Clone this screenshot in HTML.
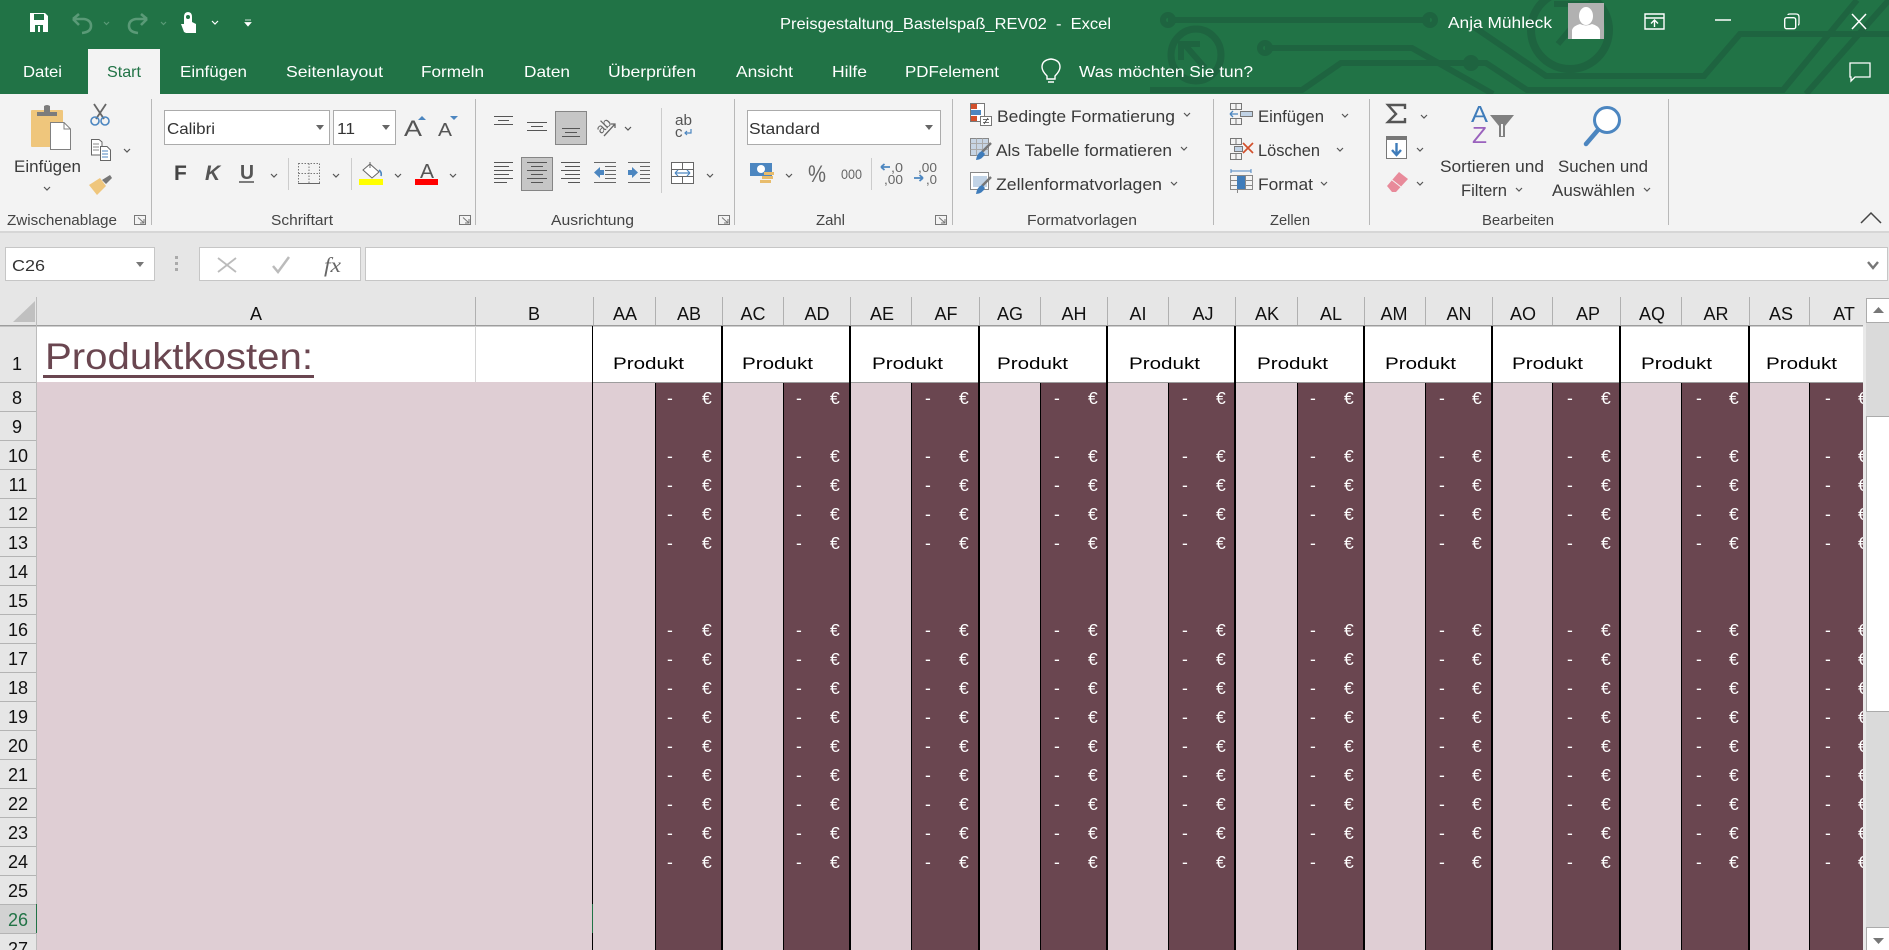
<!DOCTYPE html>
<html lang="de"><head><meta charset="utf-8"><title>Preisgestaltung_Bastelspaß_REV02 - Excel</title>
<style>
html,body{margin:0;padding:0;width:1889px;height:950px;overflow:hidden;background:#e6e6e6}
svg{display:block}
text{font-family:"Liberation Sans",sans-serif;fill:#333;font-size:16px}
.w{fill:#fff}
.r{font-size:16.5px;fill:#3a3a3a}
.g{font-size:14.5px;fill:#444}
.h{font-size:18px;fill:#111;text-anchor:middle}
.p{font-size:17px;fill:#000}
.e{font-size:17.5px;fill:#fff}
.s{fill:none;stroke:#666;stroke-width:1.3}
.c{fill:none;stroke:#555;stroke-width:1.2}
</style></head><body>
<svg width="1889" height="950" viewBox="0 0 1889 950" xmlns="http://www.w3.org/2000/svg">
<defs><clipPath id="gc"><rect x="37" y="325" width="1826" height="625"/></clipPath></defs>
<!-- title bar -->
<rect width="1889" height="94" fill="#217346"/>
<g fill="none" stroke="#1e6440" stroke-width="6">
<path d="M1168 20H1430M1474 27L1546 76H1704L1740 34H1889"/>
<path d="M1265 48H1412L1493 94"/>
<path d="M1150 90H1302L1341 63H1471H1486L1527 90H1783L1857 0"/>
<path d="M1806 94L1889 0"/>
<circle cx="1168" cy="20" r="5"/><circle cx="1430" cy="20" r="5"/><circle cx="1265" cy="48" r="5"/><circle cx="1471" cy="63" r="5"/>
<ellipse cx="1196" cy="55" rx="25" ry="26" stroke-width="7"/>
<path d="M1185 45L1205 68M1181 60V44H1200" stroke-width="6"/>
<circle cx="1570" cy="30" r="39" stroke-width="8"/>
<path d="M1554 4H1592M1590 6L1558 44" stroke-width="6"/>
</g>
<!-- QAT -->
<path d="M30 13H45L48 16V32H30Z" fill="#fff"/><rect x="34" y="14" width="10" height="6" fill="#217346"/><rect x="35" y="25" width="8" height="7" fill="#217346"/><rect x="38" y="26" width="2" height="6" fill="#fff"/>
<path d="M73 19L79 14M73 19L79 25M73 19H84Q91 20 91 26Q91 32 82 33" fill="none" stroke="#5a9a77" stroke-width="2.6"/>
<path d="M147 19L141 14M147 19L141 25M147 19H136Q129 20 129 26Q129 32 138 33" fill="none" stroke="#5a9a77" stroke-width="2.6"/>
<path d="M104 22L106.500 24.500L109 22M161 22L163.500 24.500L166 22" fill="none" stroke="#5a9a77" stroke-width="1.2"/>
<path d="M184 32L181 24L184 24V17Q184 12 188 12Q192 12 192 17V22L196 24V33H186Z" fill="#fff"/><circle cx="188" cy="17" r="2" fill="#217346"/>
<path d="M212 21L215 24L218 21" fill="none" stroke="#fff" stroke-width="1.2"/>
<path d="M245 20H251M245 22.500H251L248 26Z" fill="#fff" stroke="#fff" stroke-width=".8"/>
<text class="w" x="780" y="29" textLength="331" lengthAdjust="spacingAndGlyphs" xml:space="preserve">Preisgestaltung_Bastelspaß_REV02  -  Excel</text>
<text class="w" x="1448" y="28" textLength="104" lengthAdjust="spacingAndGlyphs">Anja Mühleck</text>
<rect x="1568" y="3" width="36" height="36" fill="#b1b1b1"/>
<ellipse cx="1586" cy="16" rx="7" ry="9" fill="#fff"/><path d="M1572 39V30Q1573 26 1580 24Q1586 27 1592 24Q1599 26 1600 30V39Z" fill="#fff"/>
<path d="M1645 14H1664V29H1645ZM1645 18H1664M1654.500 27V20.500M1651 23.500L1654.500 20L1658 23.500" fill="none" stroke="#fff" stroke-width="1.4"/>
<path d="M1715 20H1731" stroke="#fff" stroke-width="1.5"/>
<rect x="1784.700" y="17.700" width="11" height="11" rx="2" fill="none" stroke="#fff" stroke-width="1.4"/><path d="M1788 15V15Q1788 14 1790 14H1796Q1799 14 1799 17V23Q1799 25 1798 25" fill="none" stroke="#fff" stroke-width="1.3"/>
<path d="M1852 14L1866 29M1866 14L1852 29" stroke="#fff" stroke-width="1.5"/>
<path d="M1850 63H1870V77H1855L1851 81V77H1850Z" fill="none" stroke="#fff" stroke-width="1.3"/>
<!-- tabs -->
<rect x="88" y="49" width="72" height="46" fill="#f3f3f3"/>
<g class="tabs">
<text class="w" x="23" y="77" textLength="39" lengthAdjust="spacingAndGlyphs">Datei</text>
<text x="107" y="77" textLength="34" lengthAdjust="spacingAndGlyphs" style="fill:#217346">Start</text>
<text class="w" x="180" y="77" textLength="67" lengthAdjust="spacingAndGlyphs">Einfügen</text>
<text class="w" x="286" y="77" textLength="97" lengthAdjust="spacingAndGlyphs">Seitenlayout</text>
<text class="w" x="421" y="77" textLength="63" lengthAdjust="spacingAndGlyphs">Formeln</text>
<text class="w" x="524" y="77" textLength="46" lengthAdjust="spacingAndGlyphs">Daten</text>
<text class="w" x="608" y="77" textLength="88" lengthAdjust="spacingAndGlyphs">Überprüfen</text>
<text class="w" x="736" y="77" textLength="57" lengthAdjust="spacingAndGlyphs">Ansicht</text>
<text class="w" x="832" y="77" textLength="35" lengthAdjust="spacingAndGlyphs">Hilfe</text>
<text class="w" x="905" y="77" textLength="94" lengthAdjust="spacingAndGlyphs">PDFelement</text>
<text class="w" x="1079" y="77" textLength="174" lengthAdjust="spacingAndGlyphs">Was möchten Sie tun?</text>
</g>
<path d="M1047 76Q1042 71 1042 67Q1042 60 1051 59Q1060 60 1060 67Q1060 71 1055 76V79H1047ZM1048 82H1054" fill="none" stroke="#fff" stroke-width="1.4"/>
<!-- ribbon -->
<rect y="94" width="1889" height="137" fill="#f3f3f3"/>
<rect y="231" width="1889" height="2" fill="#d6d6d6"/>
<path d="M151.500 99V225M475.500 99V225M734.500 99V225M952.500 99V225M1213.500 99V225M1369.500 99V225M1668.500 99V225" stroke="#b8b8b8"/>
<text class="g" x="7" y="225" textLength="110" lengthAdjust="spacingAndGlyphs">Zwischenablage</text>
<text class="g" x="271" y="225" textLength="62" lengthAdjust="spacingAndGlyphs">Schriftart</text>
<text class="g" x="551" y="225" textLength="83" lengthAdjust="spacingAndGlyphs">Ausrichtung</text>
<text class="g" x="816" y="225" textLength="29" lengthAdjust="spacingAndGlyphs">Zahl</text>
<text class="g" x="1027" y="225" textLength="110" lengthAdjust="spacingAndGlyphs">Formatvorlagen</text>
<text class="g" x="1270" y="225" textLength="40" lengthAdjust="spacingAndGlyphs">Zellen</text>
<text class="g" x="1482" y="225" textLength="72" lengthAdjust="spacingAndGlyphs">Bearbeiten</text>
<path d="M134.500 215.500H145.500V224.500H134.500ZM138 217.500L144 223M144 219V223H140M459.500 215.500H470.500V224.500H459.500ZM463 217.500L469 223M469 219V223H465M718.500 215.500H729.500V224.500H718.500ZM722 217.500L728 223M728 219V223H724M935.500 215.500H946.500V224.500H935.500ZM939 217.500L945 223M945 219V223H941" fill="none" stroke="#777"/>
<!-- clipboard -->
<rect x="31" y="110" width="32" height="37" rx="1" fill="#efc67c"/>
<path d="M37 116V112H44V106Q47 104 50 106V112H57V116Z" fill="#7c7c7c"/>
<path d="M50.500 122.500H64L70.500 129V149.500H50.500Z" fill="#fff" stroke="#808080"/><path d="M64 122.500V129H70.500" fill="none" stroke="#808080"/>
<text class="r" x="14" y="172" textLength="67" lengthAdjust="spacingAndGlyphs">Einfügen</text>
<path d="M44 187L47 190L50 187M124 149L127 152L130 149" class="c"/>
<path d="M94 104L104 119M106 104L96 119" stroke="#666" stroke-width="1.8" fill="none"/>
<circle cx="95" cy="121" r="4" fill="none" stroke="#4c86c0" stroke-width="1.6"/><circle cx="105" cy="121" r="4" fill="none" stroke="#4c86c0" stroke-width="1.6"/>
<path d="M91.500 139.500H99L102 142V155H91.500Z" fill="#fff" stroke="#666"/><path d="M100.500 146.500H107L110.500 150V160.500H100.500Z" fill="#fff" stroke="#666"/>
<path d="M102 151H108M102 154H108M102 157H108" stroke="#4c86c0"/><path d="M93 144H99M93 147H99M93 150H99" stroke="#888"/>
<path d="M89 185L100 178L106 186L97 195Z" fill="#efc67c"/><path d="M102 180L110 175L112 178L106 184Z" fill="#777"/>
<!-- font -->
<rect x="164.500" y="110.500" width="165" height="34" fill="#fff" stroke="#ababab"/>
<rect x="333.500" y="110.500" width="62" height="34" fill="#fff" stroke="#ababab"/>
<text x="167" y="134" textLength="48" lengthAdjust="spacingAndGlyphs">Calibri</text>
<text x="337" y="134" textLength="18" lengthAdjust="spacingAndGlyphs">11</text>
<path d="M316 125H324L320 130ZM382 125H390L386 130Z" fill="#666"/>
<text x="404" y="136" style="font-size:22px;fill:#555" textLength="18" lengthAdjust="spacingAndGlyphs">A</text>
<text x="438" y="136" style="font-size:18px;fill:#555" textLength="14" lengthAdjust="spacingAndGlyphs">A</text>
<path d="M418 120L422 116L426 120ZM450 116H458L454 120Z" fill="#4c86c0"/>
<text x="174" y="180" style="font-size:21px;font-weight:bold;fill:#444">F</text>
<text x="205" y="180" style="font-size:21px;font-weight:bold;font-style:italic;fill:#555">K</text>
<text x="240" y="179" style="font-size:20px;font-weight:bold;fill:#555" textLength="14" lengthAdjust="spacingAndGlyphs">U</text>
<path d="M239 182H254" stroke="#555" stroke-width="1.500"/>
<path d="M271 174L274 177L277 174M333 174L336 177L339 174M395 174L398 177L401 174M450 174L453 177L456 174M625 127L628 130L631 127M707 174L710 177L713 174M786 174L789 177L792 174" class="c"/>
<path d="M288.500 158V190M351.500 158V190M871.500 158V190" stroke="#ccc"/>
<path d="M298.500 163.500H319.500V183.500H298.500ZM309 163.500V183.500M298.500 173.500H319.500" fill="none" stroke="#777" stroke-dasharray="1.500 1.500"/><path d="M298 183.500H320" stroke="#666"/>
<path d="M370 164L379 172L372 178L363 170Z" fill="#fff" stroke="#666"/><path d="M370 162V168" stroke="#666"/><path d="M379 170Q382 172 381 176" stroke="#4c86c0" fill="none" stroke-width="1.600"/>
<rect x="359" y="179" width="24" height="6" fill="#ff0"/>
<text x="420" y="178" style="font-size:20px;fill:#555" textLength="14" lengthAdjust="spacingAndGlyphs">A</text>
<rect x="415" y="179" width="23" height="6" fill="#f00"/>
<!-- alignment -->
<rect x="555.500" y="111.500" width="31" height="33" fill="#c6c6c6" stroke="#858585"/>
<rect x="521.500" y="157.500" width="31" height="33" fill="#c6c6c6" stroke="#858585"/>
<path d="M494 116.500H513M498 120.500H509M494 124.500H513M527 122.500H547M531 126.500H543M527 130.500H547M562 128.500H580M565 132.500H577M562 136.500H580M494 162.500H513M494 166.500H509M494 170.500H513M494 174.500H509M494 178.500H513M494 182.500H507M527 162.500H547M531 166.500H543M527 170.500H547M531 174.500H543M527 178.500H547M531 182.500H543M561 162.500H580M565 166.500H580M561 170.500H580M565 174.500H580M561 178.500H580M568 182.500H580" stroke="#555" fill="none"/>
<path d="M594 162.500H616M605 166.500H616M605 170.500H616M605 174.500H616M605 178.500H616M594 182.500H616M628 162.500H650M640 166.500H650M640 170.500H650M640 174.500H650M640 178.500H650M628 182.500H650" stroke="#666" fill="none"/>
<path d="M594 172.500L600 167V170H604V175H600V178ZM638 172.500L632 167V170H628V175H632V178Z" fill="#4c86c0"/>
<text x="596" y="130" style="font-size:14px;fill:#666" transform="rotate(-45 604 126)">ab</text>
<path d="M604 136L615 124M611 124H615V128" fill="none" stroke="#666" stroke-width="1.300"/>
<path d="M661.500 108V193" stroke="#ccc"/>
<text x="675" y="125" style="font-size:15px;fill:#555" textLength="17" lengthAdjust="spacingAndGlyphs">ab</text>
<text x="675" y="137" style="font-size:15px;fill:#555">c</text>
<path d="M691 129V133H685M687 131L685 133L687 135" fill="none" stroke="#4c86c0" stroke-width="1.200"/>
<path d="M671.500 162.500H693.500V183.500H671.500ZM671.500 169.500H693.500M671.500 176.500H693.500M682.500 162.500V169.500M682.500 176.500V183.500" fill="#fff" stroke="#666"/>
<path d="M675 173H690M675 173L678 170M675 173L678 176M690 173L687 170M690 173L687 176" fill="none" stroke="#4c86c0" stroke-width="1.200"/>
<!-- number -->
<rect x="747.500" y="110.500" width="193" height="34" fill="#fff" stroke="#ababab"/>
<path d="M925 125H933L929 130Z" fill="#666"/>
<text x="749" y="134" textLength="71" lengthAdjust="spacingAndGlyphs">Standard</text>
<rect x="750" y="163" width="22" height="13" fill="#4c86c0"/><circle cx="761" cy="169" r="4" fill="#fff"/>
<rect x="764" y="172" width="10" height="3" fill="#e8bc6c"/><rect x="762" y="176" width="11" height="3" fill="#e8bc6c"/><rect x="760" y="180" width="11" height="3" fill="#e8bc6c"/>
<text x="808" y="182" style="font-size:24px;fill:#666" textLength="18" lengthAdjust="spacingAndGlyphs">%</text>
<text x="841" y="179" style="font-size:14px;fill:#666" textLength="21" lengthAdjust="spacingAndGlyphs">000</text>
<path d="M881 167H890M881 167L884.500 164M881 167L884.500 170M914 178H923M923 178L919.500 175M923 178L919.500 181" fill="none" stroke="#4c86c0" stroke-width="1.800"/>
<text x="891" y="172" style="font-size:13px;fill:#666" textLength="12" lengthAdjust="spacingAndGlyphs">,0</text>
<text x="884" y="184" style="font-size:13px;fill:#666" textLength="19" lengthAdjust="spacingAndGlyphs">,00</text>
<text x="918" y="172" style="font-size:13px;fill:#666" textLength="19" lengthAdjust="spacingAndGlyphs">,00</text>
<text x="926" y="184" style="font-size:13px;fill:#666" textLength="11" lengthAdjust="spacingAndGlyphs">,0</text>
<!-- styles -->
<rect x="970.500" y="103.500" width="14" height="18" fill="#fff" stroke="#777"/><rect x="971" y="104" width="6" height="5" fill="#d2502c"/><rect x="971" y="110" width="10" height="5" fill="#4c86c0"/><rect x="971" y="116" width="6" height="5" fill="#d2502c"/>
<rect x="980.500" y="116.500" width="11" height="9" fill="#fff" stroke="#777"/><path d="M983 119.500H989M983 122.500H989M984 124L988 118" stroke="#444" stroke-width=".8"/>
<text class="r" x="997" y="122" textLength="178" lengthAdjust="spacingAndGlyphs">Bedingte Formatierung</text>
<path d="M970.500 138.500H988.500V155.500H970.500Z" fill="#c7d5e4" stroke="#888"/><path d="M970.500 143.500H988.500M970.500 149.500H988.500M976.500 138.500V155.500M982.500 138.500V155.500" stroke="#aaa"/>
<path d="M982 152L991 143" stroke="#777" stroke-width="2.500"/><path d="M976 160Q977 153 982 151L985 154Q982 160 976 160Z" fill="#3f7cba"/>
<text class="r" x="996" y="156" textLength="176" lengthAdjust="spacingAndGlyphs">Als Tabelle formatieren</text>
<path d="M970.500 172.500H988.500V189.500H970.500Z" fill="#fff" stroke="#888"/><rect x="973" y="176" width="14" height="11" fill="#c1d3e6"/>
<path d="M982 186L991 177" stroke="#777" stroke-width="2.500"/><path d="M976 194Q977 187 982 185L985 188Q982 194 976 194Z" fill="#3f7cba"/>
<text class="r" x="996" y="190" textLength="166" lengthAdjust="spacingAndGlyphs">Zellenformatvorlagen</text>
<path d="M1184 113L1187 116L1190 113M1181 147L1184 150L1187 147M1171 182L1174 185L1177 182" class="c"/>
<!-- cells -->
<path d="M1230.500 103.500H1241.500V109.500H1230.500ZM1236 103.500V109.500M1230.500 118.500H1241.500V124.500H1230.500ZM1236 118.500V124.500" fill="none" stroke="#777"/>
<rect x="1240.500" y="111.500" width="12" height="5" fill="#c1d3e6" stroke="#777"/><path d="M1230 114H1238M1230 114L1233 111M1230 114L1233 117" fill="none" stroke="#4c86c0" stroke-width="1.300"/>
<text class="r" x="1258" y="122" textLength="66" lengthAdjust="spacingAndGlyphs">Einfügen</text>
<path d="M1230.500 138.500H1241.500V144.500H1230.500ZM1236 138.500V144.500M1230.500 153.500H1241.500V159.500H1230.500ZM1236 153.500V159.500" fill="none" stroke="#777"/><rect x="1234.500" y="146.500" width="8" height="5" fill="#c1d3e6" stroke="#777"/>
<path d="M1243 143L1253 153M1253 143L1243 153" stroke="#d2502c" stroke-width="1.700"/>
<text class="r" x="1258" y="156" textLength="62" lengthAdjust="spacingAndGlyphs">Löschen</text>
<path d="M1231 171H1251M1231 169V173M1251 169V173" stroke="#4c86c0"/><path d="M1230.500 175.500H1252.500V189.500H1230.500ZM1230.500 180.500H1252.500M1230.500 185.500H1252.500M1237.500 175.500V193M1245.500 175.500V189.500" fill="none" stroke="#888"/><rect x="1237" y="176" width="8" height="13" fill="#3f7cba"/>
<text class="r" x="1258" y="190" textLength="55" lengthAdjust="spacingAndGlyphs">Format</text>
<path d="M1342 114L1345 117L1348 114M1337 148L1340 151L1343 148M1321 182L1324 185L1327 182" class="c"/>
<!-- editing -->
<path d="M1405 109V105H1388L1396 114L1388 122H1405V118" fill="none" stroke="#555" stroke-width="2.400"/>
<rect x="1386.500" y="136.500" width="20" height="22" fill="#fff" stroke="#777"/><rect x="1386" y="136" width="21" height="4" fill="#777"/>
<path d="M1396.500 143V154M1392 150L1396.500 155L1401 150" fill="none" stroke="#3f7cba" stroke-width="2.400"/>
<path d="M1387 186L1399 172L1408 179L1396 192H1392Z" fill="#e88a9a"/><path d="M1392 180L1401 187" stroke="#f3f3f3"/>
<path d="M1421 115L1424 118L1427 115M1417 148L1420 151L1423 148M1417 182L1420 185L1423 182" class="c"/>
<text x="1471" y="122" style="font-size:23px;fill:#3f7cba" textLength="17" lengthAdjust="spacingAndGlyphs">A</text>
<text x="1472" y="143" style="font-size:23px;fill:#9a62bd" textLength="15" lengthAdjust="spacingAndGlyphs">Z</text>
<path d="M1490 115H1514L1505 126V137H1499V126Z" fill="#808080"/><path d="M1501 124V136H1503V124Z" fill="#f3f3f3"/>
<circle cx="1607" cy="120" r="12.500" fill="#fff" stroke="#4c86c0" stroke-width="3"/>
<path d="M1598 130L1586 144" stroke="#4c86c0" stroke-width="4.500" stroke-linecap="round"/>
<text class="r" x="1440" y="172" textLength="104" lengthAdjust="spacingAndGlyphs">Sortieren und</text>
<text class="r" x="1461" y="196" textLength="46" lengthAdjust="spacingAndGlyphs">Filtern</text>
<text class="r" x="1558" y="172" textLength="90" lengthAdjust="spacingAndGlyphs">Suchen und</text>
<text class="r" x="1552" y="196" textLength="83" lengthAdjust="spacingAndGlyphs">Auswählen</text>
<path d="M1516 188L1519 191L1522 188M1644 188L1647 191L1650 188" class="c"/>
<path d="M1861 223L1871 213L1881 223" fill="none" stroke="#444" stroke-width="1.500"/>
<!-- formula bar -->
<rect x="5.500" y="247.500" width="149" height="33" fill="#fff" stroke="#c6c6c6"/>
<text x="12" y="271" textLength="33" lengthAdjust="spacingAndGlyphs">C26</text>
<path d="M136 262H144L140 267Z" fill="#777"/>
<path d="M176.500 256V259M176.500 262V265M176.500 268V271" stroke="#aaa" stroke-width="3"/>
<rect x="199.500" y="247.500" width="161" height="33" fill="#fff" stroke="#c6c6c6"/>
<rect x="365.500" y="247.500" width="1522" height="33" fill="#fff" stroke="#c6c6c6"/>
<path d="M218 258L236 272M236 258L218 272" stroke="#bbb" stroke-width="1.800"/>
<path d="M273 266L278 272L289 257" fill="none" stroke="#bbb" stroke-width="2.500"/>
<text x="324" y="272" style="font-family:'Liberation Serif',serif;font-style:italic;font-size:21px;fill:#666" textLength="17" lengthAdjust="spacingAndGlyphs">fx</text>
<path d="M1868 262L1873 268L1878 262" fill="none" stroke="#777" stroke-width="2.400"/>
<!-- grid -->
<rect y="297" width="1889" height="653" fill="#e6e6e6"/>
<path d="M35 301V322H13Z" fill="#c0c0c0"/>
<rect x="37" y="326" width="1826" height="57" fill="#fff"/>
<rect x="37" y="382" width="1826" height="568" fill="#dfced4"/>
<g fill="#6a4650">
<rect x="656" y="382" width="66" height="568"/><rect x="784" y="382" width="66" height="568"/><rect x="912" y="382" width="67" height="568"/><rect x="1041" y="382" width="66" height="568"/><rect x="1169" y="382" width="66" height="568"/><rect x="1298" y="382" width="66" height="568"/><rect x="1426" y="382" width="66" height="568"/><rect x="1553" y="382" width="67" height="568"/><rect x="1682" y="382" width="67" height="568"/><rect x="1810" y="382" width="53" height="568"/>
</g>
<rect x="0" y="325" width="1863" height="1.500" fill="#9d9d9d"/>
<rect x="593" y="382" width="1270" height="1" fill="#9d9d9d"/>
<path d="M475.500 326V382" stroke="#d4d4d4"/>
<path d="M36.500 297V950" stroke="#bcbcbc"/>
<path d="M475.500 297V325M593.500 297V325M655.500 297V325M722.500 297V325M783.500 297V325M850.500 297V325M911.500 297V325M979.500 297V325M1040.500 297V325M1107.500 297V325M1168.500 297V325M1235.500 297V325M1297.500 297V325M1364.500 297V325M1425.500 297V325M1492.500 297V325M1552.500 297V325M1620.500 297V325M1681.500 297V325M1749.500 297V325M1809.500 297V325" stroke="#b0b0b0"/>
<g stroke="#000" fill="none">
<path d="M592.500 326V950M655.500 383V950M783.500 383V950M911.500 383V950M1040.500 383V950M1168.500 383V950M1297.500 383V950M1425.500 383V950M1552.500 383V950M1681.500 383V950M1809.500 383V950"/>
<path stroke-width="2" d="M722 326V950M850 326V950M979 326V950M1107 326V950M1235 326V950M1364 326V950M1492 326V950M1620 326V950M1749 326V950"/>
</g>
<path d="M592.500 904V933" stroke="#217346"/>
<text x="45" y="369" style="font-size:37px;fill:#6a4650" textLength="268" lengthAdjust="spacingAndGlyphs">Produktkosten:</text>
<rect x="43" y="375" width="271" height="3" fill="#6a4650"/>
<g class="hd">
<text class="h" x="256" y="320">A</text><text class="h" x="534" y="320">B</text><text class="h" x="625" y="320">AA</text><text class="h" x="689" y="320">AB</text><text class="h" x="753" y="320">AC</text><text class="h" x="817" y="320">AD</text><text class="h" x="882" y="320">AE</text><text class="h" x="946" y="320">AF</text><text class="h" x="1010" y="320">AG</text><text class="h" x="1074" y="320">AH</text><text class="h" x="1138" y="320">AI</text><text class="h" x="1203" y="320">AJ</text><text class="h" x="1267" y="320">AK</text><text class="h" x="1331" y="320">AL</text><text class="h" x="1394" y="320">AM</text><text class="h" x="1459" y="320">AN</text><text class="h" x="1523" y="320">AO</text><text class="h" x="1588" y="320">AP</text><text class="h" x="1652" y="320">AQ</text><text class="h" x="1716" y="320">AR</text><text class="h" x="1781" y="320">AS</text><text class="h" x="1844" y="320">AT</text>
</g>
<g>
<text class="p" x="613" y="369" textLength="71" lengthAdjust="spacingAndGlyphs">Produkt</text><text class="p" x="742" y="369" textLength="71" lengthAdjust="spacingAndGlyphs">Produkt</text><text class="p" x="872" y="369" textLength="71" lengthAdjust="spacingAndGlyphs">Produkt</text><text class="p" x="997" y="369" textLength="71" lengthAdjust="spacingAndGlyphs">Produkt</text><text class="p" x="1129" y="369" textLength="71" lengthAdjust="spacingAndGlyphs">Produkt</text><text class="p" x="1257" y="369" textLength="71" lengthAdjust="spacingAndGlyphs">Produkt</text><text class="p" x="1385" y="369" textLength="71" lengthAdjust="spacingAndGlyphs">Produkt</text><text class="p" x="1512" y="369" textLength="71" lengthAdjust="spacingAndGlyphs">Produkt</text><text class="p" x="1641" y="369" textLength="71" lengthAdjust="spacingAndGlyphs">Produkt</text><text class="p" x="1766" y="369" textLength="71" lengthAdjust="spacingAndGlyphs">Produkt</text>
</g>
<!-- row headers -->
<rect x="0" y="904" width="36" height="29" fill="#d2d2d2"/>
<path d="M36.500 904V933" stroke="#217346"/>
<path d="M0 411.500H36M0 440.500H36M0 469.500H36M0 498.500H36M0 527.500H36M0 556.500H36M0 585.500H36M0 614.500H36M0 643.500H36M0 672.500H36M0 701.500H36M0 730.500H36M0 759.500H36M0 788.500H36M0 817.500H36M0 846.500H36M0 875.500H36M0 904.500H36M0 933.500H36M0 382.500H36" stroke="#b4b4b4"/>
<text class="h" x="17" y="370">1</text>
<text class="h" x="17" y="404">8</text><text class="h" x="17" y="433">9</text><text class="h" x="18" y="462">10</text><text class="h" x="18" y="491">11</text><text class="h" x="18" y="520">12</text><text class="h" x="18" y="549">13</text><text class="h" x="18" y="578">14</text><text class="h" x="18" y="607">15</text><text class="h" x="18" y="636">16</text><text class="h" x="18" y="665">17</text><text class="h" x="18" y="694">18</text><text class="h" x="18" y="723">19</text><text class="h" x="18" y="752">20</text><text class="h" x="18" y="781">21</text><text class="h" x="18" y="810">22</text><text class="h" x="18" y="839">23</text><text class="h" x="18" y="868">24</text><text class="h" x="18" y="897">25</text><text class="h" x="18" y="926" style="fill:#217346">26</text><text class="h" x="18" y="955">27</text>
<g clip-path="url(#gc)">
<text class="e" y="404" x="667 702 796 830 925 959 1054 1088 1182 1216 1310 1344 1439 1472 1567 1601 1696 1729 1825 1858">-€-€-€-€-€-€-€-€-€-€</text>
<text class="e" y="462" x="667 702 796 830 925 959 1054 1088 1182 1216 1310 1344 1439 1472 1567 1601 1696 1729 1825 1858">-€-€-€-€-€-€-€-€-€-€</text>
<text class="e" y="491" x="667 702 796 830 925 959 1054 1088 1182 1216 1310 1344 1439 1472 1567 1601 1696 1729 1825 1858">-€-€-€-€-€-€-€-€-€-€</text>
<text class="e" y="520" x="667 702 796 830 925 959 1054 1088 1182 1216 1310 1344 1439 1472 1567 1601 1696 1729 1825 1858">-€-€-€-€-€-€-€-€-€-€</text>
<text class="e" y="549" x="667 702 796 830 925 959 1054 1088 1182 1216 1310 1344 1439 1472 1567 1601 1696 1729 1825 1858">-€-€-€-€-€-€-€-€-€-€</text>
<text class="e" y="636" x="667 702 796 830 925 959 1054 1088 1182 1216 1310 1344 1439 1472 1567 1601 1696 1729 1825 1858">-€-€-€-€-€-€-€-€-€-€</text>
<text class="e" y="665" x="667 702 796 830 925 959 1054 1088 1182 1216 1310 1344 1439 1472 1567 1601 1696 1729 1825 1858">-€-€-€-€-€-€-€-€-€-€</text>
<text class="e" y="694" x="667 702 796 830 925 959 1054 1088 1182 1216 1310 1344 1439 1472 1567 1601 1696 1729 1825 1858">-€-€-€-€-€-€-€-€-€-€</text>
<text class="e" y="723" x="667 702 796 830 925 959 1054 1088 1182 1216 1310 1344 1439 1472 1567 1601 1696 1729 1825 1858">-€-€-€-€-€-€-€-€-€-€</text>
<text class="e" y="752" x="667 702 796 830 925 959 1054 1088 1182 1216 1310 1344 1439 1472 1567 1601 1696 1729 1825 1858">-€-€-€-€-€-€-€-€-€-€</text>
<text class="e" y="781" x="667 702 796 830 925 959 1054 1088 1182 1216 1310 1344 1439 1472 1567 1601 1696 1729 1825 1858">-€-€-€-€-€-€-€-€-€-€</text>
<text class="e" y="810" x="667 702 796 830 925 959 1054 1088 1182 1216 1310 1344 1439 1472 1567 1601 1696 1729 1825 1858">-€-€-€-€-€-€-€-€-€-€</text>
<text class="e" y="839" x="667 702 796 830 925 959 1054 1088 1182 1216 1310 1344 1439 1472 1567 1601 1696 1729 1825 1858">-€-€-€-€-€-€-€-€-€-€</text>
<text class="e" y="868" x="667 702 796 830 925 959 1054 1088 1182 1216 1310 1344 1439 1472 1567 1601 1696 1729 1825 1858">-€-€-€-€-€-€-€-€-€-€</text>
</g>
<!-- scrollbar -->
<rect x="1863" y="325" width="3" height="625" fill="#e9e9e9"/>
<rect x="1866" y="322" width="23" height="628" fill="#dadada"/>
<rect x="1866.500" y="298.500" width="23" height="24" fill="#fff" stroke="#ababab"/>
<path d="M1873 313H1884L1878.500 307Z" fill="#777"/>
<rect x="1866.500" y="416.500" width="23" height="295" fill="#fff" stroke="#ababab"/>
<rect x="1866.500" y="927.500" width="23" height="24" fill="#fff" stroke="#ababab"/>
<path d="M1873 938H1884L1878.500 944Z" fill="#777"/>
</svg>
</body></html>
